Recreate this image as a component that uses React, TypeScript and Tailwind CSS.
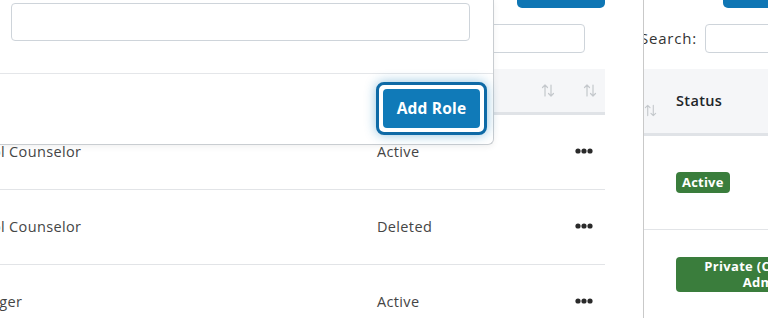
import React from 'react';

const SortIcon = () => (
  <svg width="14" height="13" viewBox="0 0 14 13" fill="none" stroke="#c4c8cc" strokeWidth="1.2" strokeLinecap="round" strokeLinejoin="round">
    <path d="M4 12V1M1.5 3.5L4 1l2.5 2.5" />
    <path d="M10 1v11M7.5 9.5L10 12l2.5-2.5" />
  </svg>
);

const Dots = () => (
  <svg width="18" height="6" viewBox="0 0 18 6" fill="#2a2a2a">
    <circle cx="3" cy="3" r="2.6" />
    <circle cx="9" cy="3" r="2.6" />
    <circle cx="15" cy="3" r="2.6" />
  </svg>
);

const rows = [
  { name: 'School Counselor', shift: '-ml-[42px]', status: 'Active' },
  { name: 'School Counselor', shift: '-ml-[42px]', status: 'Deleted' },
  { name: 'Case Manager', shift: '-ml-[78px]', status: 'Active' },
];

export default function App() {
  return (
    <div className="relative w-[768px] h-[318px] overflow-hidden flex bg-white font-['Open_Sans',sans-serif] text-[14.5px] tracking-[0.35px] text-[#454545]">
      {/* left table */}
      <div className="w-[605px] shrink-0 flex flex-col">
        <div className="flex justify-end shrink-0">
          <div className="w-[88px] h-[38px] -mt-[30px] rounded-[5px] bg-[#0f76b4]" />
        </div>
        <div className="flex justify-end pr-[20px] pt-[16px] shrink-0">
          <input className="w-[200px] h-[29px] border border-[#ced4da] rounded-[4px] outline-none" />
        </div>
        <div className="mt-[16px] h-[46px] shrink-0 grid grid-cols-[362px_200px_43px] bg-[#f5f6f8] border-b-[3px] border-[#e0e3e7]">
          <div />
          <div className="flex items-center justify-end pr-[7px]">
            <SortIcon />
          </div>
          <div className="flex items-center justify-end pr-[8px]">
            <SortIcon />
          </div>
        </div>
        {rows.map((r, i) => (
          <div key={i} className="h-[75px] shrink-0 grid grid-cols-[362px_200px_43px] border-b border-[#e2e4e7]">
            <div className="flex items-center overflow-hidden">
              <span className={`${r.shift} whitespace-nowrap`}>{r.name}</span>
            </div>
            <div className="flex items-center pl-[15px]">{r.status}</div>
            <div className="flex items-center justify-center pb-[3px]">
              <Dots />
            </div>
          </div>
        ))}
      </div>

      <div className="w-[38px] shrink-0" />

      {/* right table */}
      <div className="flex-1 min-w-0 border-l border-[#c9c9c9] flex flex-col overflow-hidden">
        <div className="flex shrink-0">
          <div className="ml-[79px] w-[88px] h-[38px] -mt-[30px] shrink-0 rounded-[5px] bg-[#0f76b4]" />
        </div>
        <div className="flex items-center pt-[16px] shrink-0">
          <div className="w-[53px] shrink-0 flex justify-end">
            <span className="shrink-0 whitespace-nowrap text-[#333] text-[15px] tracking-[0.8px]">Search:</span>
          </div>
          <input className="ml-[8px] w-[200px] h-[29px] shrink-0 border border-[#ced4da] rounded-[4px] outline-none" />
        </div>
        <div className="mt-[16px] h-[67px] shrink-0 grid grid-cols-[17px_240px] bg-[#f5f6f8] border-b-[3px] border-[#e0e3e7]">
          <div className="flex items-center justify-end pr-[4px] pt-[18px]">
            <SortIcon />
          </div>
          <div className="flex items-center px-[15px] font-semibold text-[#212529]">Status</div>
        </div>
        <div className="h-[94px] shrink-0 grid grid-cols-[17px_240px] border-b border-[#e2e4e7]">
          <div />
          <div className="flex items-center px-[15px]">
            <span className="h-[21px] px-[6px] rounded-[4px] bg-[#3a7d3c] text-white text-[13px] font-bold leading-[21px] tracking-[0.2px]">
              Active
            </span>
          </div>
        </div>
        <div className="h-[90px] shrink-0 grid grid-cols-[17px_240px]">
          <div />
          <div className="flex items-start px-[15px] pt-[27px]">
            <span className="w-[182px] shrink-0 py-[2px] rounded-[4px] bg-[#3a7d3c] text-white text-[13px] font-bold leading-[15.5px] tracking-[0.3px] text-center">
              Private (Counselor
              <br />
              Admin)
            </span>
          </div>
        </div>
      </div>

      {/* add role popover */}
      <div className="absolute left-0 top-0 w-[494px] h-[145px] bg-white border-r border-b border-[#c9cdd1] rounded-br-[6px] shadow-[0_2px_6px_rgba(0,0,0,0.06)] flex flex-col">
        <div className="pt-[3px] pl-[11px]">
          <input className="w-[459px] h-[38px] border border-[#ced4da] rounded-[4px] outline-none" />
        </div>
        <div className="mt-[32px] border-t border-[#e4e6e9]" />
        <div className="flex justify-end pr-[6px] pt-[8px]">
          <div className="border-[3px] border-[#0e6aa6] rounded-[8px] p-[4px] bg-white shadow-[0_0_12px_rgba(16,122,184,0.45)]">
            <button className="w-[97px] h-[39px] rounded-[4px] bg-[#107ab8] text-white text-[15.5px] font-bold tracking-[0.2px]">
              Add Role
            </button>
          </div>
        </div>
      </div>
    </div>
  );
}
